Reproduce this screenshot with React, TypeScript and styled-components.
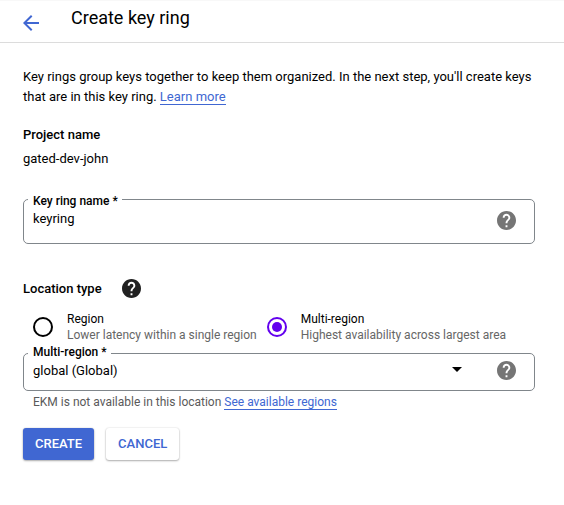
import React, { useState } from "react";
import styled, { createGlobalStyle } from "styled-components";

const BLUE = "#4067d2";

const GlobalStyle = createGlobalStyle`
  *, *::before, *::after { box-sizing: border-box; }
  body {
    margin: 0;
    background: #fff;
    color: #000;
    font-family: Roboto, "Liberation Sans", sans-serif;
    font-size: 13px;
    line-height: 20px;
  }
  button, input, select { font: inherit; color: inherit; }
`;

const Header = styled.header`
  display: flex;
  align-items: flex-start;
  gap: 32px;
  height: 43px;
  padding: 5px 23px 0;
  border-top: 1px solid #f8f8f8;
  border-bottom: 1px solid #dcdcdc;
`;

const BackButton = styled.button`
  display: flex;
  margin: 9px 0 0;
  padding: 0;
  border: 0;
  background: none;
  color: ${BLUE};
  cursor: pointer;
`;

const Title = styled.h1`
  margin: 0;
  font-size: 18px;
  line-height: 24px;
  font-weight: 400;
`;

const Form = styled.form`
  padding: 24px 29px 24px 23px;
`;

const Intro = styled.p`
  margin: 0 0 18px;
`;

const Link = styled.a`
  color: ${BLUE};
  text-decoration: none;
  border-bottom: 1px solid ${BLUE};
`;

const SectionTitle = styled.h2`
  margin: 0;
  font-size: 13px;
  line-height: 20px;
  font-weight: 500;
`;

const ProjectValue = styled.p`
  margin: 4px 0 21px;
`;

const Outline = styled.fieldset`
  min-width: 0;
  margin: 0;
  padding: 0 18px 0 9px;
  border: 1px solid #80868b;
  border-radius: 5px;
`;

const OutlineLabel = styled.legend<{ $raised?: boolean }>`
  margin-left: -5px;
  padding: ${(p) => (p.$raised ? "0 4px 2px 5px" : "4px 4px 0 5px")};
  font-size: 12px;
  line-height: 14px;
  font-weight: 500;
`;

const FieldRow = styled.div<{ $bottom: number }>`
  display: flex;
  align-items: center;
  gap: 35px;
  padding-bottom: ${(p) => p.$bottom}px;
`;

const TextInput = styled.input`
  flex: 1;
  min-width: 0;
  height: 24px;
  padding: 0 0 4px;
  border: 0;
  outline: 0;
  background: none;
`;

const SelectBox = styled.div`
  position: relative;
  display: flex;
  flex: 1;
  min-width: 0;
`;

const Select = styled.select`
  width: 100%;
  height: 19px;
  padding: 0 0 2px;
  border: 0;
  outline: 0;
  appearance: none;
  background: none;
`;

const Caret = styled.svg`
  position: absolute;
  top: 6px;
  right: 0;
  pointer-events: none;
`;

const HelpButton = styled.button<{ $dark?: boolean }>`
  display: flex;
  padding: 0;
  border: 0;
  background: none;
  color: ${(p) => (p.$dark ? "#212121" : "#757575")};
  cursor: pointer;
`;

const LocationHeading = styled.div`
  display: flex;
  align-items: flex-start;
  gap: 20px;
  margin: 35px 0 12px;
`;

const RadioGroup = styled.div`
  display: flex;
  gap: 10px;
  padding: 0 0 2px 10px;
`;

const RadioOption = styled.label`
  display: flex;
  align-items: center;
  gap: 14px;
  font-size: 12px;
  line-height: 16px;
  white-space: nowrap;
  cursor: pointer;
`;

const Radio = styled.input`
  display: grid;
  place-content: center;
  width: 20px;
  height: 20px;
  margin: 0;
  border: 2px solid #000;
  border-radius: 50%;
  appearance: none;

  &:checked {
    border-color: #6200ee;
  }
  &:checked::before {
    content: "";
    width: 10px;
    height: 10px;
    border-radius: 50%;
    background: #6200ee;
  }
`;

const OptionText = styled.span`
  display: flex;
  flex-direction: column;
`;

const Muted = styled.span`
  color: #666;
`;

const Hint = styled.p`
  margin: 3px 0 18px;
  padding-left: 10px;
  font-size: 12px;
  line-height: 16px;
  color: #5a5a5a;
`;

const Actions = styled.div`
  display: flex;
  gap: 12px;
`;

const Button = styled.button<{ $primary?: boolean }>`
  height: 32px;
  padding: 0 12px;
  border: 0;
  border-radius: 3px;
  background: ${(p) => (p.$primary ? BLUE : "#fff")};
  color: ${(p) => (p.$primary ? "#fff" : BLUE)};
  font-weight: 500;
  box-shadow: 0 1px 2px rgba(0, 0, 0, 0.3), 0 0 2px rgba(0, 0, 0, 0.14);
  cursor: pointer;
`;

function Help({ label, dark }: { label: string; dark?: boolean }) {
  return (
    <HelpButton type="button" aria-label={label} $dark={dark}>
      <svg width="19" height="19" viewBox="2 2 20 20" fill="currentColor" aria-hidden="true">
        <path d="M12 2C6.48 2 2 6.48 2 12s4.48 10 10 10 10-4.48 10-10S17.52 2 12 2zm1 17h-2v-2h2v2zm2.07-7.75l-.9.92C13.45 12.9 13 13.5 13 15h-2v-.5c0-1.1.45-2.1 1.17-2.83l1.24-1.26c.37-.36.59-.86.59-1.41 0-1.1-.9-2-2-2s-2 .9-2 2H8c0-2.21 1.79-4 4-4s4 1.79 4 4c0 .88-.36 1.68-.93 2.25z" />
      </svg>
    </HelpButton>
  );
}

const locations = [
  { value: "region", name: "Region", detail: "Lower latency within a single region" },
  { value: "multi", name: "Multi-region", detail: "Highest availability across largest area" },
];

export default function App() {
  const [name, setName] = useState("keyring");
  const [location, setLocation] = useState("multi");

  return (
    <>
      <GlobalStyle />
      <Header>
        <BackButton type="button" aria-label="Back">
          <svg width="16" height="16" viewBox="4 4 16 16" fill="currentColor" aria-hidden="true">
            <path d="M20 11H7.83l5.59-5.59L12 4l-8 8 8 8 1.41-1.41L7.83 13H20v-2z" />
          </svg>
        </BackButton>
        <Title>Create key ring</Title>
      </Header>
      <Form onSubmit={(e) => e.preventDefault()}>
        <Intro>
          Key rings group keys together to keep them organized. In the next step, you'll create keys
          that are in this key ring. <Link href="#learn-more">Learn more</Link>
        </Intro>
        <SectionTitle>Project name</SectionTitle>
        <ProjectValue>gated-dev-john</ProjectValue>
        <Outline>
          <OutlineLabel>
            <label htmlFor="ring-name">Key ring name *</label>
          </OutlineLabel>
          <FieldRow $bottom={11}>
            <TextInput id="ring-name" value={name} onChange={(e) => setName(e.target.value)} />
            <Help label="About key ring names" />
          </FieldRow>
        </Outline>
        <LocationHeading>
          <SectionTitle id="location-type">Location type</SectionTitle>
          <Help label="About location types" dark />
        </LocationHeading>
        <RadioGroup role="radiogroup" aria-labelledby="location-type">
          {locations.map((item) => (
            <RadioOption key={item.value}>
              <Radio
                type="radio"
                name="location"
                checked={location === item.value}
                onChange={() => setLocation(item.value)}
              />
              <OptionText>
                <span>{item.name}</span>
                <Muted>{item.detail}</Muted>
              </OptionText>
            </RadioOption>
          ))}
        </RadioGroup>
        <Outline>
          <OutlineLabel $raised>
            <label htmlFor="multi-region">Multi-region *</label>
          </OutlineLabel>
          <FieldRow $bottom={10}>
            <SelectBox>
              <Select id="multi-region" defaultValue="global">
                <option value="global">global (Global)</option>
              </Select>
              <Caret width="10" height="5" viewBox="0 0 10 5" aria-hidden="true">
                <path d="M0 0h10L5 5z" />
              </Caret>
            </SelectBox>
            <Help label="About multi-regions" />
          </FieldRow>
        </Outline>
        <Hint>
          EKM is not available in this location <Link href="#regions">See available regions</Link>
        </Hint>
        <Actions>
          <Button type="submit" $primary>CREATE</Button>
          <Button type="button">CANCEL</Button>
        </Actions>
      </Form>
    </>
  );
}
